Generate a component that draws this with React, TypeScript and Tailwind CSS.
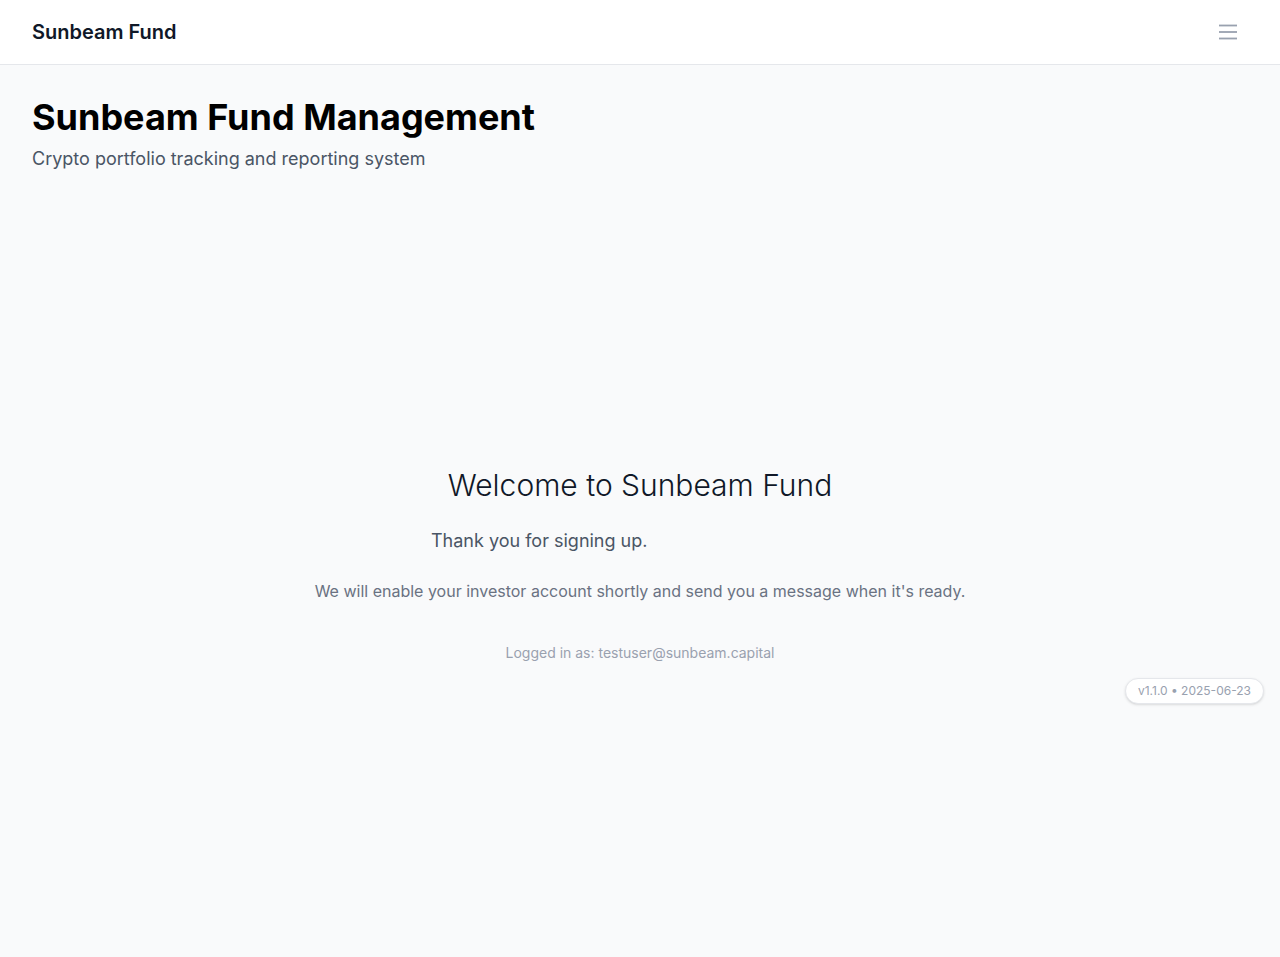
export default function App() {
  return (
    <div
      className="relative min-h-screen bg-gray-50"
      style={{ fontFamily: 'Inter, "Noto Sans", sans-serif' }}
    >
      {/* Header */}
      <header className="h-[65px] bg-white border-b border-gray-200 flex items-center justify-between pl-8 pr-[42px]">
        <span className="text-xl font-semibold text-gray-900">Sunbeam Fund</span>
        <button className="text-gray-400">
          <svg width="20" height="16" viewBox="0 0 20 16" fill="none" stroke="currentColor" strokeWidth="1.8">
            <line x1="1" y1="1.5" x2="19" y2="1.5" />
            <line x1="1" y1="8" x2="19" y2="8" />
            <line x1="1" y1="14.5" x2="19" y2="14.5" />
          </svg>
        </button>
      </header>

      {/* Page title */}
      <div className="px-8 pt-8">
        <h1 className="text-4xl font-bold text-black">Sunbeam Fund Management</h1>
        <p className="mt-2 text-lg text-gray-600">Crypto portfolio tracking and reporting system</p>
      </div>

      {/* Welcome */}
      <div className="pt-[294px] flex flex-col items-center text-center">
        <h2 className="text-3xl font-light text-gray-900">Welcome to Sunbeam Fund</h2>
        <div className="mt-6 w-[418px] text-left">
          <p className="text-lg text-gray-600">Thank you for signing up.</p>
        </div>
        <p className="mt-6 text-base text-gray-500">
          We will enable your investor account shortly and send you a message when it's ready.
        </p>
        <p className="mt-10 text-sm text-gray-400">Logged in as: testuser@sunbeam.capital</p>
      </div>

      {/* Version badge */}
      <div className="absolute right-4 top-[678px] rounded-full border border-gray-200 bg-white px-3 py-1 text-xs text-gray-400 shadow-sm">
        v1.1.0 • 2025-06-23
      </div>
    </div>
  )
}
